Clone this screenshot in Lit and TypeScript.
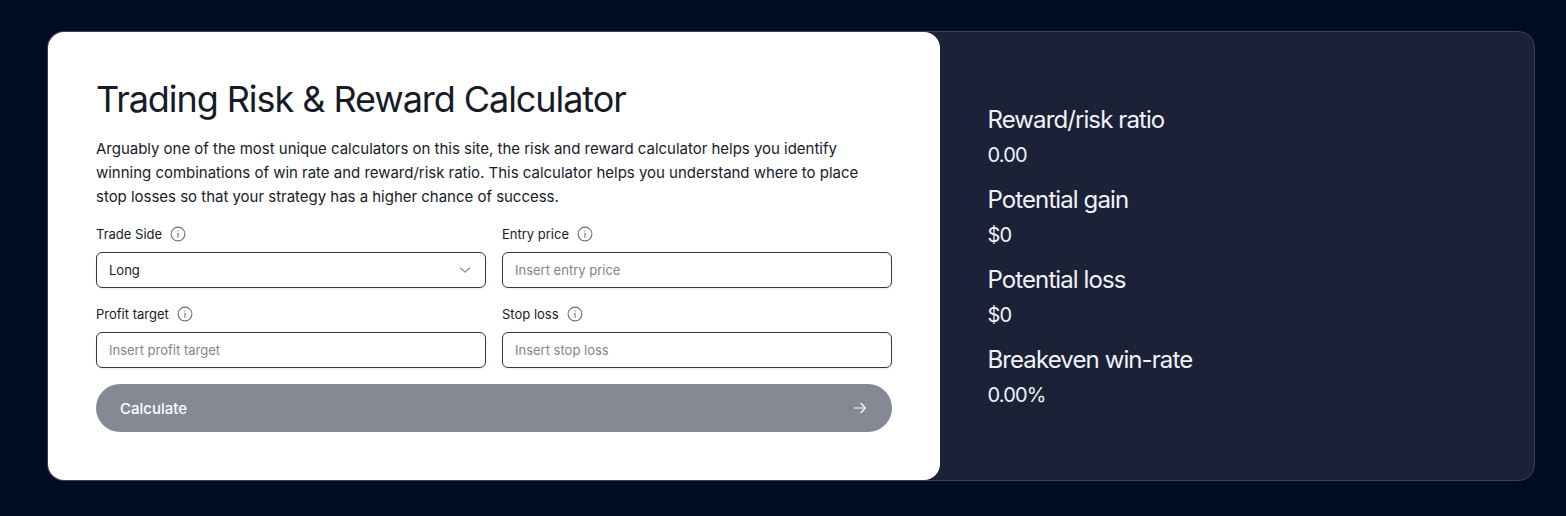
import { LitElement, html, css } from "lit";
import { customElement } from "lit/decorators.js";

const info = html`<svg class="info" viewBox="0 0 16 16" fill="none" stroke="#6b7280" stroke-width="1.1"><circle cx="8" cy="8" r="6.9"/><path d="M8 7.3v4" stroke-linecap="round"/><circle cx="8" cy="4.9" r=".55" fill="#6b7280" stroke="none"/></svg>`;

const results = [
  ["Reward/risk ratio", "0.00"],
  ["Potential gain", "$0"],
  ["Potential loss", "$0"],
  ["Breakeven win-rate", "0.00%"],
];

@customElement("app-root")
export class AppRoot extends LitElement {
  static styles = css`
    :host { display: block; width: 1566px; height: 516px; background: #020b24; font-family: "Inter", "Liberation Sans", sans-serif; padding: 31px 31px 35px 47px; box-sizing: border-box; overflow: hidden; }
    .card { display: flex; height: 450px; box-sizing: border-box; border: 1px solid #3a4056; border-radius: 16px; background: #1b2238; }
    .left { width: 892px; flex: none; box-sizing: border-box; background: #fff; border-radius: 16px; padding: 48px; color: #111827; }
    h1 { margin: 0 0 19px; font-size: 36px; line-height: 38px; font-weight: 400; letter-spacing: -1.06px; color: #161b2a; }
    p { margin: 0 0 13px; font-size: 15px; line-height: 24px; letter-spacing: -0.02px; color: #161b2a; }
    .grid { display: grid; grid-template-columns: 390px 390px; gap: 14px 16px; }
    .field { display: flex; flex-direction: column; }
    .label { display: flex; align-items: center; gap: 8px; height: 24px; margin-bottom: 6px; font-size: 13px; color: #161b2a; }
    .info { width: 16px; height: 16px; }
    .box { height: 36px; box-sizing: border-box; border: 1px solid #2f3750; border-radius: 6px; padding: 0 13px 0 12px; display: flex; align-items: center; justify-content: space-between; font-size: 13px; color: #161b2a; box-shadow: 0 1px 2px rgba(0,0,0,.08); }
    .ph { color: #808590; }
    .chev { width: 14px; height: 14px; }
    .btn { margin-top: 16px; height: 48px; border-radius: 24px; background: #858994; color: #fff; display: flex; align-items: center; justify-content: space-between; padding: 0 25px 0 24px; font-size: 15px; font-weight: 500; }
    .arrow { width: 14px; height: 14px; }
    .right { flex: 1; padding: 68px 48px 0 47.5px; color: #f1f3f8; }
    .item { height: 80px; }
    .t { font-size: 24px; line-height: 40px; font-weight: 400; letter-spacing: -0.9px; }
    .v { font-size: 20px; line-height: 28px; margin-top: 1px; letter-spacing: -0.85px; }
  `;

  private field(label: string, ph: string) {
    return html`<div class="field"><div class="label">${label}${info}</div><div class="box"><span class="ph">${ph}</span></div></div>`;
  }

  render() {
    return html`<div class="card">
      <div class="left">
        <h1>Trading Risk &amp; Reward Calculator</h1>
        <p>Arguably one of the most unique calculators on this site, the risk and reward calculator helps you identify<br>winning combinations of win rate and reward/risk ratio. This calculator helps you understand where to place<br>stop losses so that your strategy has a higher chance of success.</p>
        <div class="grid">
          <div class="field"><div class="label">Trade Side${info}</div><div class="box"><span>Long</span><svg class="chev" viewBox="0 0 14 14" fill="none" stroke="#808590" stroke-width="1.1" stroke-linecap="round" stroke-linejoin="round"><path d="M2.5 5l4.5 4.2L11.500 5"/></svg></div></div>
          ${this.field("Entry price", "Insert entry price")}
          ${this.field("Profit target", "Insert profit target")}
          ${this.field("Stop loss", "Insert stop loss")}
        </div>
        <div class="btn"><span>Calculate</span><svg class="arrow" viewBox="0 0 14 14" fill="none" stroke="#fff" stroke-width="1.2" stroke-linecap="round" stroke-linejoin="round"><path d="M1.500 7h11M8 2.500 12.500 7 8 11.500"/></svg></div>
      </div>
      <div class="right">
        ${results.map(([t, v]) => html`<div class="item"><div class="t">${t}</div><div class="v">${v}</div></div>`)}
      </div>
    </div>`;
  }
}
